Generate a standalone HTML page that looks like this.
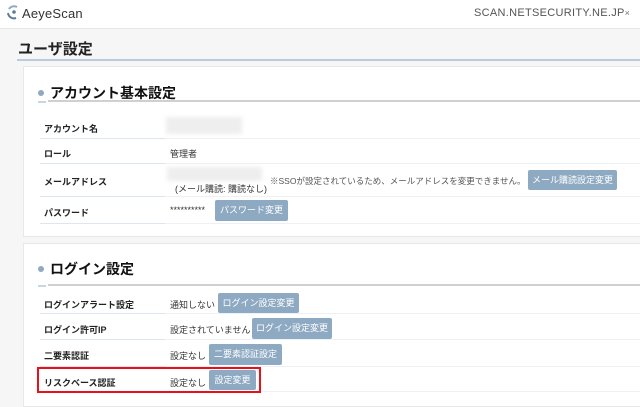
<!DOCTYPE html>
<html><head><meta charset="utf-8"><style>
*{margin:0;padding:0;box-sizing:border-box}
body{width:640px;height:407px;overflow:hidden;background:#f6f6f6;font-family:"Liberation Sans","Noto Sans CJK JP",sans-serif;color:#222;position:relative}
.a{position:absolute;white-space:nowrap}
.hdr{left:0;top:0;width:640px;height:29px;background:#fff;border-bottom:1px solid #e6e6e6}
.card{background:#fff;border:1px solid #e8e8e8;border-right:none}
.lbl{font-size:9px;font-weight:bold;color:#222}
.val{font-size:9px;color:#333}
.btn{background:#8eaac3;color:#fff;font-size:9px;text-align:center;border-radius:2px}
.l1{height:1px;background:#dde6ef}
.l2{height:1px;background:#edf1f5}
.h2{font-size:14px;font-weight:bold;color:#111}
.dot{width:6px;height:6px;border-radius:50%;background:#8fa9c2}
</style></head><body>
<div class="a hdr"></div>
<svg class="a" style="left:6px;top:4px" width="16" height="16" viewBox="0 0 16 16"><path d="M3 5 A6 6 0 0 1 11 3" stroke="#8fa9c2" stroke-width="2" fill="none"/><path d="M2 9 A6 6 0 0 0 10 14" stroke="#5b7d9c" stroke-width="2" fill="none"/><circle cx="8" cy="8" r="1.8" fill="#5b7d9c"/></svg>
<div class="a" style="left:22px;top:6px;font-size:13px;color:#333;letter-spacing:0.2px">AeyeScan</div>
<div class="a" style="left:474px;top:7px;font-size:11px;color:#555;letter-spacing:0.3px">SCAN.NETSECURITY.NE.JP<span style="font-size:9px;color:#777">×</span></div>
<div class="a" style="left:18px;top:38px;font-size:15px;font-weight:bold;color:#222">ユーザ設定</div>
<div class="a" style="left:17px;top:59px;width:623px;height:2px;background:#bccbd8"></div>

<div class="a card" style="left:23px;top:66px;width:617px;height:171px"></div>
<div class="a dot" style="left:38px;top:90px"></div>
<div class="a h2" style="left:50px;top:83px">アカウント基本設定</div>
<div class="a" style="left:48px;top:100px;width:592px;height:2px;background:#d0d0d0"></div>
<div class="a" style="left:38px;top:101px;width:8px;height:2px;background:#c8d6e3"></div>

<div class="a lbl" style="left:44px;top:122px">アカウント名</div>
<div class="a" style="left:166px;top:117px;width:76px;height:17px;background:#eee;filter:blur(2px)"></div>
<div class="a l1" style="left:40px;top:138px;width:125px"></div><div class="a l2" style="left:165px;top:138px;width:475px"></div>
<div class="a lbl" style="left:44px;top:147px">ロール</div>
<div class="a val" style="left:170px;top:147px">管理者</div>
<div class="a l1" style="left:40px;top:163px;width:125px"></div><div class="a l2" style="left:165px;top:163px;width:475px"></div>
<div class="a lbl" style="left:44px;top:175px">メールアドレス</div>
<div class="a" style="left:167px;top:167px;width:95px;height:14px;background:#eee;filter:blur(2px)"></div>
<div class="a val" style="left:175px;top:182px">(メール購読: 購読なし)</div>
<div class="a val" style="left:270px;top:175px;font-size:8.5px;color:#555">※SSOが設定されているため、メールアドレスを変更できません。</div>
<div class="a btn" style="left:528px;top:170px;width:89px;height:20px;line-height:20px">メール購読設定変更</div>
<div class="a l1" style="left:40px;top:196px;width:125px"></div><div class="a l2" style="left:165px;top:196px;width:475px"></div>
<div class="a lbl" style="left:44px;top:206px">パスワード</div>
<div class="a val" style="left:170px;top:205px">**********</div>
<div class="a btn" style="left:215px;top:200px;width:73px;height:21px;line-height:21px">パスワード変更</div>
<div class="a l1" style="left:40px;top:223px;width:125px"></div><div class="a l2" style="left:165px;top:223px;width:475px"></div>

<div class="a card" style="left:23px;top:243px;width:617px;height:164px"></div>
<div class="a dot" style="left:38px;top:266px"></div>
<div class="a h2" style="left:50px;top:259px">ログイン設定</div>
<div class="a" style="left:48px;top:284px;width:592px;height:2px;background:#d0d0d0"></div>
<div class="a" style="left:38px;top:285px;width:8px;height:2px;background:#c8d6e3"></div>

<div class="a lbl" style="left:44px;top:298px">ログインアラート設定</div>
<div class="a val" style="left:170px;top:298px">通知しない</div>
<div class="a btn" style="left:218px;top:293px;width:81px;height:20px;line-height:20px">ログイン設定変更</div>
<div class="a l1" style="left:40px;top:313px;width:125px"></div><div class="a l2" style="left:165px;top:313px;width:475px"></div>
<div class="a lbl" style="left:44px;top:323px">ログイン許可IP</div>
<div class="a val" style="left:170px;top:323px">設定されていません</div>
<div class="a btn" style="left:252px;top:318px;width:80px;height:21px;line-height:21px">ログイン設定変更</div>
<div class="a l1" style="left:40px;top:339px;width:125px"></div><div class="a l2" style="left:165px;top:339px;width:475px"></div>
<div class="a lbl" style="left:44px;top:349px">二要素認証</div>
<div class="a val" style="left:170px;top:349px">設定なし</div>
<div class="a btn" style="left:209px;top:344px;width:73px;height:21px;line-height:21px">二要素認証設定</div>
<div class="a l1" style="left:40px;top:366px;width:125px"></div><div class="a l2" style="left:165px;top:366px;width:475px"></div>
<div class="a lbl" style="left:44px;top:376px">リスクベース認証</div>
<div class="a val" style="left:170px;top:376px">設定なし</div>
<div class="a btn" style="left:209px;top:370px;width:47px;height:20px;line-height:20px">設定変更</div>
<div class="a l2" style="left:40px;top:391px;width:600px"></div>
<div class="a" style="left:37px;top:367px;width:224px;height:26px;border:2px solid #e8101a"></div>
</body></html>
